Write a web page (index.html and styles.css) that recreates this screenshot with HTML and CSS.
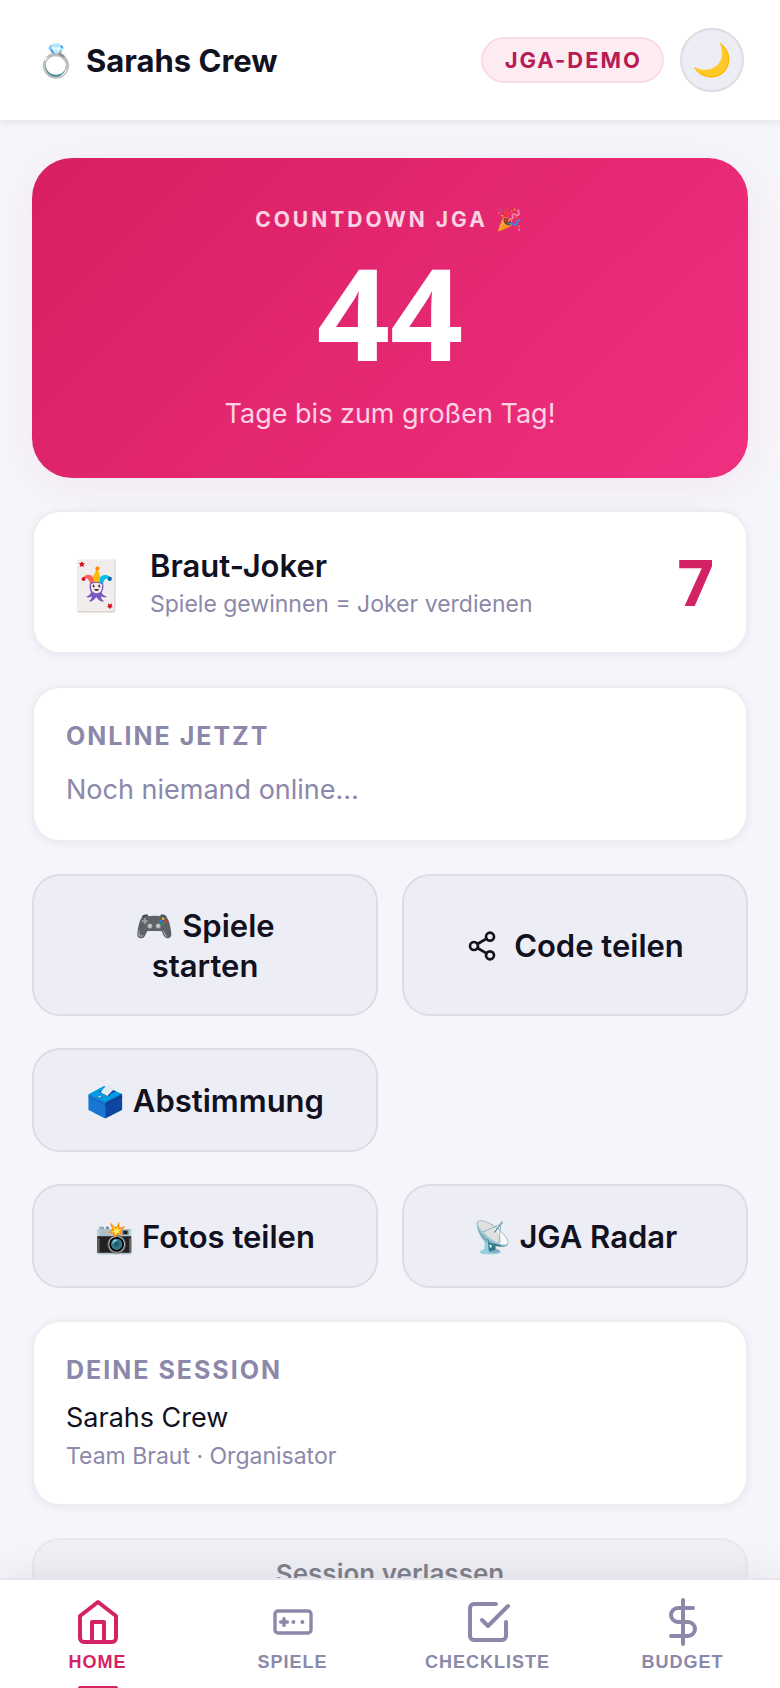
FILE: index.html
```html
<!DOCTYPE html>
<html lang="de">
<head>
<meta charset="utf-8">
<meta name="viewport" content="width=device-width, initial-scale=1">
<title>Sarahs Crew</title>
<link rel="stylesheet" href="styles.css">
</head>
<body>
<header class="topbar">
  <div class="brand"><span class="brand-icon">💍</span><h1 class="brand-name">Sarahs Crew</h1></div>
  <div class="topbar-actions">
    <button class="code-pill" type="button">JGA-DEMO</button>
    <button class="theme-toggle" type="button" aria-label="Dunkles Design">🌙</button>
  </div>
</header>

<main class="content">
  <section class="hero">
    <p class="hero-label">Countdown JGA 🎉</p>
    <p class="hero-number">44</p>
    <p class="hero-text">Tage bis zum großen Tag!</p>
  </section>

  <section class="card joker">
    <span class="joker-icon">🃏</span>
    <div class="joker-body">
      <h2 class="joker-title">Braut-Joker</h2>
      <p class="small muted">Spiele gewinnen = Joker verdienen</p>
    </div>
    <span class="joker-count">7</span>
  </section>

  <section class="card online">
    <h2 class="card-label">Online jetzt</h2>
    <p class="muted">Noch niemand online…</p>
  </section>

  <div class="actions">
    <button class="btn" type="button"><span>🎮 Spiele starten</span></button>
    <button class="btn" type="button">
      <svg class="btn-icon" viewBox="0 0 24 24" aria-hidden="true"><circle cx="18" cy="5" r="3"/><circle cx="6" cy="12" r="3"/><circle cx="18" cy="19" r="3"/><path d="M8.59 13.51l6.83 3.98M15.41 6.51l-6.82 3.98"/></svg>
      <span>Code teilen</span>
    </button>
    <button class="btn" type="button"><span>🗳️ Abstimmung</span></button>
  </div>

  <div class="actions">
    <button class="btn" type="button"><span>📸 Fotos teilen</span></button>
    <button class="btn" type="button"><span>📡 JGA Radar</span></button>
  </div>

  <section class="card session">
    <h2 class="card-label">Deine Session</h2>
    <p>Sarahs Crew</p>
    <p class="small muted">Team Braut · Organisator</p>
  </section>

  <button class="btn leave" type="button">Session verlassen</button>
</main>

<nav class="tabs">
  <a class="tab active" href="#home" aria-current="page">
    <svg class="tab-icon" viewBox="0 0 24 24" aria-hidden="true"><path d="M3 9l9-7 9 7v11a2 2 0 0 1-2 2H5a2 2 0 0 1-2-2z"/><path d="M9 22V12h6v10"/></svg>
    <span>Home</span>
  </a>
  <a class="tab" href="#spiele">
    <svg class="tab-icon" viewBox="0 0 24 24" aria-hidden="true"><rect x="3" y="6.500" width="18" height="11" rx="1.500" stroke-width="1.700"/><path d="M5.800 12h3.400M7.500 10.300v3.400" stroke-width="1.700"/><path d="M12.200 12h.010M16.700 12h.010"/></svg>
    <span>Spiele</span>
  </a>
  <a class="tab" href="#checkliste">
    <svg class="tab-icon" viewBox="0 0 24 24" aria-hidden="true"><path d="M9 11l3 3L22 4"/><path d="M21 12v7a2 2 0 0 1-2 2H5a2 2 0 0 1-2-2V5a2 2 0 0 1 2-2h11"/></svg>
    <span>Checkliste</span>
  </a>
  <a class="tab" href="#budget">
    <svg class="tab-icon" viewBox="0 0 24 24" aria-hidden="true"><path d="M12 1v22M17 5H9.500a3.500 3.500 0 0 0 0 7h5a3.500 3.500 0 0 1 0 7H6"/></svg>
    <span>Budget</span>
  </a>
</nav>
</body>
</html>
```

FILE: styles.css
```css
:root {
  --pink: #d42365;
  --ink: #11111f;
  --muted: #8b88aa;
  --line: #dcdce2;
  --soft: #ededf5;
  --page: #f5f6fb;
}

* { box-sizing: border-box; }

h1, h2, p { margin: 0; }

body {
  margin: 0;
  height: 100vh;
  display: flex;
  flex-direction: column;
  overflow: hidden;
  background: var(--page);
  color: var(--ink);
  font: 400 27px/40px Inter, "Noto Sans", sans-serif;
}

button { font: inherit; color: inherit; cursor: pointer; }

.topbar {
  flex: none;
  z-index: 1;
  display: flex;
  align-items: center;
  justify-content: space-between;
  height: 120px;
  padding: 0 36px;
  background: #fff;
  box-shadow: 0 2px 8px rgba(0, 0, 0, 0.08);
}

.brand { display: flex; align-items: center; gap: 10px; padding-top: 2px; }
.brand-icon { font-size: 32px; }
.brand-name { font-size: 31px; font-weight: 700; }

.topbar-actions { display: flex; align-items: center; gap: 16px; }

.code-pill {
  height: 46px;
  padding: 0 20px 0 22px;
  border: 2px solid #fbdbe6;
  border-radius: 23px;
  background: #fdedf3;
  color: #b71c56;
  font-size: 22px;
  font-weight: 700;
  letter-spacing: 2px;
}

.theme-toggle {
  width: 64px;
  height: 64px;
  padding: 0;
  border: 2px solid var(--line);
  border-radius: 50%;
  background: var(--soft);
  font-size: 32px;
}

.content {
  flex: 1;
  min-height: 0;
  overflow-y: auto;
  scrollbar-width: none;
  display: flex;
  flex-direction: column;
  gap: 32px;
  padding: 38px 32px 32px;
}

.content > * { flex: none; }

.hero {
  padding: 44px 32px;
  border-radius: 40px;
  background: linear-gradient(135deg, #d81f62, #f02f80);
  box-shadow: 0 8px 48px rgba(212, 35, 101, 0.08);
  color: #fff;
  text-align: center;
}

.hero-label {
  font-size: 21px;
  line-height: 36px;
  font-weight: 700;
  letter-spacing: 3px;
  text-transform: uppercase;
  opacity: 0.8;
}

.hero-number {
  padding: 10px 0 18px;
  font: 700 128px/128px "Open Sans", sans-serif;
}

.hero-text { color: #fdd2e3; }

.card {
  padding: 30px 32px;
  border: 2px solid #ededf1;
  border-radius: 28px;
  background: #fff;
  box-shadow: 0 2px 10px rgba(0, 0, 0, 0.06);
}

.muted { color: var(--muted); }
.small { font-size: 23px; line-height: 36px; }

.card-label {
  color: var(--muted);
  font-size: 25px;
  line-height: 36px;
  font-weight: 700;
  letter-spacing: 2px;
  text-transform: uppercase;
}

.joker { display: flex; align-items: center; gap: 24px; }
.joker-icon { width: 60px; padding-top: 6px; font-size: 48px; line-height: 60px; text-align: center; }
.joker-body { flex: 1; padding-top: 4px; }
.joker-title { font-size: 31px; line-height: 40px; font-weight: 600; }
.joker-count { color: var(--pink); font: 700 64px/80px "Open Sans", sans-serif; }

.online { display: grid; gap: 16px; }
.session .card-label { margin-bottom: 10px; }

.actions {
  display: grid;
  grid-template-columns: repeat(2, minmax(0, 1fr));
  gap: 32px 24px;
}

.btn {
  display: flex;
  align-items: center;
  justify-content: center;
  gap: 16px;
  min-height: 104px;
  padding: 30px 48px 28px;
  border: 2px solid var(--line);
  border-radius: 28px;
  background: var(--soft);
  font-size: 31px;
  font-weight: 600;
}

.btn-icon { width: 32px; height: 32px; }

.btn-icon,
.tab-icon {
  flex: none;
  fill: none;
  stroke: currentColor;
  stroke-width: 2;
  stroke-linecap: round;
  stroke-linejoin: round;
}

.leave { min-height: 72px; padding: 14px 48px; font-size: 26px; opacity: 0.5; }

.tabs {
  flex: none;
  z-index: 1;
  display: grid;
  grid-template-columns: repeat(4, minmax(0, 1fr));
  height: 110px;
  border-top: 2px solid #e6e6eb;
  background: #fff;
  box-shadow: 0 -4px 40px rgba(0, 0, 0, 0.08);
}

.tab {
  position: relative;
  display: flex;
  flex-direction: column;
  align-items: center;
  gap: 4px;
  padding-top: 18px;
  color: var(--muted);
  font: 700 18px/24px "Liberation Sans", Arial, sans-serif;
  letter-spacing: 1px;
  text-decoration: none;
  text-transform: uppercase;
}

.tab-icon { width: 48px; height: 48px; }
.tab.active { color: var(--pink); }

.tab.active::after {
  content: "";
  position: absolute;
  bottom: 0;
  width: 40px;
  height: 2px;
  border-radius: 2px 2px 0 0;
  background: var(--pink);
}
```
